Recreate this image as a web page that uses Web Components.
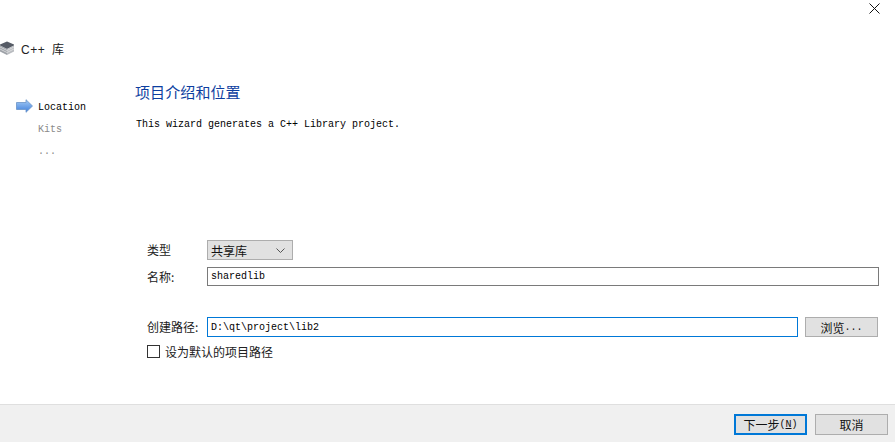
<!DOCTYPE html>
<html lang="zh">
<head>
<meta charset="utf-8">
<title>C++ 库</title>
<style>
  html, body { margin: 0; height: 100%; background: #fff; }
  body { font: 12px "Noto Sans CJK SC", sans-serif; color: #000; overflow: hidden; }
</style>
</head>
<body>
<wizard-dialog>
  <wizard-side slot="side"></wizard-side>
  <wizard-page slot="page"></wizard-page>
  <wizard-button slot="footer" default>下一步<span>(<u>N</u>)</span></wizard-button>
  <wizard-button slot="footer">取消</wizard-button>
</wizard-dialog>

<script>
const MONO = '"Liberation Mono", "Noto Sans CJK SC", monospace';
const CJK = '"Noto Sans CJK SC", sans-serif';

class WizardDialog extends HTMLElement {
  connectedCallback() {
    this.attachShadow({ mode: 'open' });
    this.shadowRoot.innerHTML = `
      <style>
        :host { display: flex; flex-direction: column; width: 895px; height: 442px; }
        .title { height: 17px; display: flex; justify-content: flex-end; padding-right: 15px; align-items: flex-start; }
        .title svg { display: block; margin-top: 3px; }
        .head { height: 30px; padding-top: 16px; display: flex; align-items: center; gap: 7px; font: 12px "Liberation Sans", ${CJK}; color: #222; letter-spacing: .5px; word-spacing: 3px; }
        .head svg { display: block; }
        .body { flex: 1; display: flex; min-height: 0; }
        .footer { height: 38px; box-sizing: border-box; border-top: 1px solid #dfdfdf; background: #f0f0f0;
          display: flex; justify-content: flex-end; align-items: flex-start; gap: 8px; padding: 9px 7px 0 0; }
      </style>
      <div class="title">
        <svg width="11" height="11" viewBox="0 0 11 11"><path d="M.5.5l10 10M10.5.5l-10 10" stroke="#111" fill="none"/></svg>
      </div>
      <div class="head">
        <svg width="14" height="14" viewBox="0 0 14 14">
          <path d="M7 .5L14 3.5V4.5L7 8 0 4.5V3.5z" fill="#565c66"/>
          <path d="M0 4.5L7 8v6L0 10.5z" fill="#9ea2a8"/>
          <path d="M14 4.5L7 8v6l7-3.5z" fill="#b9bcc0"/>
          <path d="M0 6L7 9.5M0 8L7 11.5M14 6L7 9.5M14 8L7 11.5" stroke="#e8e9ea" stroke-width=".7" fill="none"/>
        </svg>
        <span>C++ 库</span>
      </div>
      <div class="body"><slot name="side"></slot><slot name="page"></slot></div>
      <div class="footer"><slot name="footer"></slot></div>`;
  }
}

class WizardSide extends HTMLElement {
  connectedCallback() {
    this.attachShadow({ mode: 'open' });
    this.shadowRoot.innerHTML = `
      <style>
        :host { display: block; width: 135px; flex: none; box-sizing: border-box; padding: 33px 0 0 16px;
          font: 10px ${MONO}; color: #8a8a8a; }
        .row { height: 22px; display: flex; align-items: center; padding-left: 22px; position: relative; }
        .on { color: #000; }
        svg { position: absolute; left: 0; top: 3px; }
      </style>
      <div class="row on">
        <svg width="17" height="14" viewBox="0 0 17 14">
          <defs><linearGradient id="a" x1="0" y1="0" x2="0" y2="1"><stop offset="0" stop-color="#a6ccf5"/><stop offset="1" stop-color="#3f7fdc"/></linearGradient></defs>
          <path d="M.5 3.5H10V.7L16.5 7 10 13.3V10.5H.5z" fill="url(#a)" stroke="#6a93c6" stroke-width=".8"/>
        </svg>Location</div>
      <div class="row">Kits</div>
      <div class="row">...</div>`;
  }
}

class WizardPage extends HTMLElement {
  connectedCallback() {
    this.attachShadow({ mode: 'open' });
    this.shadowRoot.innerHTML = `
      <style>
        :host { display: block; flex: 1; min-width: 0; box-sizing: border-box; padding: 17px 16px 0 0; }
        h1 { margin: 0; height: 24px; font: 400 15px/24px ${CJK}; color: #0d3ea0; letter-spacing: .1px; }
        p { margin: 14px 0 0 1px; height: 14px; font: 10px/14px ${MONO}; white-space: pre; }
        .form { margin: 108px 0 0 12px; display: grid; grid-template-columns: 60px 1fr; font: 12px ${CJK}; color: #222; align-items: center; }
        .label { line-height: 19px; }
        .r1 { height: 20px; margin-bottom: 7px; }
        .r2 { height: 19px; margin-bottom: 31px; }
        .path { display: flex; gap: 7px; height: 20px; margin-right: 1px; }
        .check { grid-column: 1 / 3; display: flex; align-items: center; gap: 5px; margin-top: 7px; height: 14px; }
        .box { width: 11px; height: 11px; border: 1px solid #333; background: #fff; flex: none; }
      </style>
      <h1>项目介绍和位置</h1>
      <p>This wizard generates a C++ Library project.</p>
      <div class="form">
        <span class="label r1">类型</span>
        <div class="r1"><wizard-combo>共享库</wizard-combo></div>
        <span class="label r2">名称:</span>
        <div class="r2"><wizard-input value="sharedlib"></wizard-input></div>
        <span class="label" style="height:20px">创建路径:</span>
        <div class="path"><wizard-input focused value="D:\\qt\\project\\lib2" style="flex:1"></wizard-input><wizard-button small>浏览<span>...</span></wizard-button></div>
        <div class="check"><span class="box"></span><span>设为默认的项目路径</span></div>
      </div>`;
  }
}

class WizardCombo extends HTMLElement {
  connectedCallback() {
    this.attachShadow({ mode: 'open' });
    this.shadowRoot.innerHTML = `
      <style>
        :host { display: flex; width: 86px; height: 20px; box-sizing: border-box; border: 1px solid #adadad; background: #e1e1e1;
          align-items: center; justify-content: space-between; padding: 0 7px 0 3px; font: 12px ${CJK}; color: #111; }
        svg { display: block; }
      </style>
      <span><slot></slot></span>
      <svg width="9" height="5" viewBox="0 0 9 5"><path d="M.5.5l4 4 4-4" stroke="#555" fill="none"/></svg>`;
  }
}

class WizardInput extends HTMLElement {
  connectedCallback() {
    this.attachShadow({ mode: 'open' });
    const focused = this.hasAttribute('focused');
    this.shadowRoot.innerHTML = `
      <style>
        :host { display: flex; height: 100%; box-sizing: border-box; border: 1px solid ${focused ? '#0078d7' : '#7a7a7a'}; background: #fff;
          align-items: center; padding: 0 3px; font: 10px ${MONO}; color: #000; white-space: pre; }
      </style>
      <span></span>`;
    this.shadowRoot.querySelector('span').textContent = this.getAttribute('value');
  }
}

class WizardButton extends HTMLElement {
  connectedCallback() {
    this.attachShadow({ mode: 'open' });
    const primary = this.hasAttribute('default');
    this.shadowRoot.innerHTML = `
      <style>
        :host { display: flex; width: 73px; height: ${this.hasAttribute('small') ? '20' : '21'}px; flex: none; box-sizing: border-box;
          border: ${primary ? '2px solid #0078d7' : '1px solid #adadad'}; background: #e1e1e1;
          align-items: center; justify-content: center; font: 12px ${CJK}; color: #111; white-space: pre; }
        ::slotted(span) { font: 10px ${MONO}; }
      </style>
      <slot></slot>`;
  }
}

customElements.define('wizard-dialog', WizardDialog);
customElements.define('wizard-side', WizardSide);
customElements.define('wizard-page', WizardPage);
customElements.define('wizard-combo', WizardCombo);
customElements.define('wizard-input', WizardInput);
customElements.define('wizard-button', WizardButton);
</script>
</body>
</html>
